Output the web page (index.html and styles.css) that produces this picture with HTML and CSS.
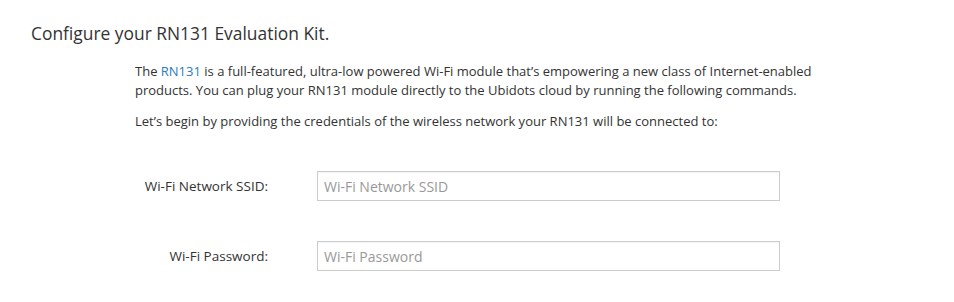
FILE: index.html
```html
<!DOCTYPE html>
<html lang="en">
<head>
    <meta charset="UTF-8">
    <title>Configure RN131</title>
    <link rel="stylesheet" href="styles.css">
</head>
<body>
<div class="page">
    <h1 class="title">Configure your RN131 Evaluation Kit.</h1>
    <div class="intro">
        <p>The <a href="#" class="link">RN131</a> is a full-featured, ultra-low powered Wi-Fi module that’s empowering a new class of Internet-enabled products. You can plug your RN131 module directly to the Ubidots cloud by running the following commands.</p>
        <p>Let’s begin by providing the credentials of the wireless network your RN131 will be connected to:</p>
    </div>
    <form class="wifi-form">
        <div class="form-row">
            <label for="ssid">Wi-Fi Network SSID:</label>
            <input type="text" id="ssid" placeholder="Wi-Fi Network SSID">
        </div>
        <div class="form-row">
            <label for="password">Wi-Fi Password:</label>
            <input type="text" id="password" placeholder="Wi-Fi Password">
        </div>
    </form>
</div>
</body>
</html>
```

FILE: styles.css
```css
body {
    margin: 0;
    padding: 0;
    font-family: "Open Sans", Arial, sans-serif;
    background-color: #fff;
    color: #333;
}
.page {
    padding-top: 21px;
}
.title {
    margin: 0 0 0 31px;
    font-size: 17.4px;
    font-weight: normal;
    line-height: 24px;
    color: #333;
}
.intro {
    margin: 17px 0 0 135px;
    width: 690px;
    font-size: 13px;
    line-height: 19px;
}
.intro p {
    margin: 0 0 12px 0;
}
.link {
    color: #2a7cc0;
    text-decoration: none;
}
.wifi-form {
    margin-top: 40px;
}
.form-row {
    display: flex;
    align-items: center;
    margin-bottom: 40px;
}
.form-row label {
    width: 317px;
    padding-right: 49px;
    box-sizing: border-box;
    text-align: right;
    font-size: 13.5px;
}
.form-row input {
    width: 463px;
    height: 30px;
    box-sizing: border-box;
    border: 1px solid #ccc;
    padding: 0 6px;
    font-family: "Open Sans", Arial, sans-serif;
    font-size: 14px;
    color: #333;
    box-shadow: inset 0 1px 1px rgba(0, 0, 0, 0.05);
}
.form-row input::placeholder {
    color: #999;
}
```
